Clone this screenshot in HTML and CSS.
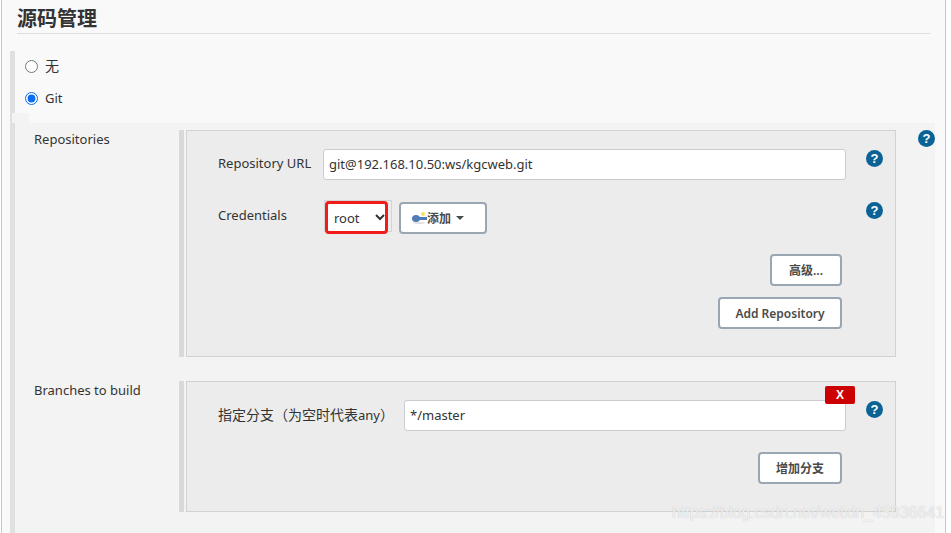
FILE: index.html
```html
<!DOCTYPE html>
<html lang="zh">
<head>
<meta charset="utf-8">
<title>源码管理</title>
<link rel="stylesheet" href="styles.css">
</head>
<body>
<div class="page">
  <h2 class="title">源码管理</h2>
  <div class="scm">
    <div class="opts">
      <label class="opt"><input type="radio" name="scm"><span class="cjk">无</span></label>
      <label class="opt"><input type="radio" name="scm" checked><span>Git</span></label>
    </div>
    <div class="tab"></div>
    <div class="panel">
      <div class="section repos">
        <div class="sec-label">Repositories</div>
        <div class="box repo-box">
          <div class="row url-row">
            <label class="lbl">Repository URL</label>
            <input class="text" type="text" value="git@192.168.10.50:ws/kgcweb.git">
            <svg class="help" viewBox="0 0 17 17"><circle cx="8.5" cy="8.5" r="8.5"/><text x="8.5" y="13.2" text-anchor="middle">?</text></svg>
          </div>
          <div class="row cred-row">
            <label class="lbl">Credentials</label>
            <div class="cred">
              <span class="sel-wrap"><select class="sel"><option>root</option></select></span>
              <button class="btn add" type="button">
                <svg class="key" viewBox="0 0 15 12"><circle cx="11" cy="2" r="2" fill="#f6e05a"/><ellipse cx="7" cy="11" rx="6" ry="1" fill="#e0e0e0"/><ellipse cx="4" cy="6.5" rx="4" ry="3.5" fill="#4f7cb5"/><rect x="6" y="5" width="9" height="3" fill="#4f7cb5"/></svg><span>添加</span><i class="caret"></i>
              </button>
            </div>
            <svg class="help" viewBox="0 0 17 17"><circle cx="8.5" cy="8.5" r="8.5"/><text x="8.5" y="13.2" text-anchor="middle">?</text></svg>
          </div>
          <div class="actions adv"><button class="btn adv-btn" type="button">高级...</button></div>
          <div class="actions addrepo"><button class="btn addrepo-btn" type="button">Add Repository</button></div>
        </div>
        <svg class="help outer" viewBox="0 0 17 17"><circle cx="8.5" cy="8.5" r="8.5"/><text x="8.5" y="13.2" text-anchor="middle">?</text></svg>
      </div>
      <div class="section branches">
        <div class="sec-label">Branches to build</div>
        <div class="box branch-box">
          <button class="del" type="button">X</button>
          <div class="row url-row">
            <label class="lbl"><span class="cjk">指定分支（为空时代表</span>any<span class="cjk">）</span></label>
            <input class="text" type="text" value="*/master">
            <svg class="help" viewBox="0 0 17 17"><circle cx="8.5" cy="8.5" r="8.5"/><text x="8.5" y="13.2" text-anchor="middle">?</text></svg>
          </div>
          <div class="actions addbranch"><button class="btn branch-btn" type="button">增加分支</button></div>
        </div>
      </div>
    </div>
  </div>
  <div class="watermark">https://blog.csdn.net/weixin_45936641</div>
</div>
</body>
</html>
```
FILE: styles.css
```css
*, *::before, *::after { box-sizing: border-box; }
html, body { margin: 0; height: 100%; background: #fff; overflow: hidden; }
body {
  font-family: "Noto Sans", "Noto Sans CJK SC", sans-serif;
  font-size: 13px;
  color: #333;
}
.cjk { font-size: 14px; font-family: "Noto Sans CJK SC", sans-serif; }
.page {
  position: relative;
  margin-left: 1px;
  width: 945px;
  height: 533px;
  border-left: 1px solid #c8c8c8;
  border-right: 1px solid #c8c8c8;
  background: #f9f9f9;
  overflow: hidden;
}
.title {
  margin: 0 15px 0 15px;
  height: 34px;
  padding-top: 4px;
  font-size: 20px;
  line-height: 28px;
  font-weight: 700;
  font-family: "Noto Sans CJK SC", sans-serif;
  color: #333;
  border-bottom: 1px solid #ddd;
}
.scm {
  margin: 17px 0 0 8px;
  border-left: 5px solid #e0e0e0;
  height: 482px;
}
.opts { display: flex; flex-direction: column; gap: 2px; }
.opt {
  display: flex;
  align-items: center;
  height: 30px;
  padding-left: 10px;
}
.opt .cjk { padding-bottom: 2px; }
.opt input { margin: 0 7px 0 0; width: 13px; height: 13px; accent-color: #0b6cf0; }
.tab { width: 17px; height: 10px; margin-left: -3px; background: #f3f3f3; }
.panel { width: 920px; height: 410px; padding-top: 7px; background: #f3f3f3; }
.section { display: flex; position: relative; padding-left: 19px; }
.sec-label { width: 145px; line-height: 18px; }
.repos { height: 251px; }
.box {
  position: relative;
  width: 710px;
  margin-left: 7px;
  border: 1px solid #d2d2d2;
  background: #ececec;
  padding: 18px 12px 0 31px;
}
.box::before {
  content: "";
  position: absolute;
  left: -8px;
  top: -1px;
  bottom: -1px;
  width: 5px;
  background: #d9d9d9;
}
.repo-box { height: 227px; }
.branch-box { height: 131px; }
.row { display: flex; align-items: flex-start; }
.url-row { height: 31px; }
.lbl { white-space: nowrap; flex: none; width: 105px; height: 28px; line-height: 28px; }
.branch-box .lbl { width: 186px; }
.text {
  flex: 1;
  min-width: 0;
  height: 31px;
  border: 1px solid #c8cdd2;
  border-radius: 3px;
  background: #fff;
  padding: 0 5px 2px;
  font: inherit;
  color: #333;
}
.help { width: 17px; height: 17px; margin: 1px 0 0 20px; flex: none; fill: #0b6395; }
.help text { fill: #fff; font: 700 13px "Liberation Sans", sans-serif; }
.help.outer { position: absolute; left: 903px; top: 0; margin: 0; }
.cred-row { margin-top: 22px; height: 31px; }
.cred-row .help { margin-top: 0; }
.cred-row .lbl { width: 106px; line-height: 26px; }
.cred { flex: 1; display: flex; align-items: flex-start; }
.sel-wrap {
  position: relative;
  display: block;
  flex: none;
  width: 68px;
  height: 32px;
  margin-top: -2px;
  padding: 1px 0 0 1px;
  border: 1px solid #d4d4d4;
}
.sel-wrap::after {
  content: "";
  position: absolute;
  left: 0;
  top: 0;
  width: 63px;
  height: 33px;
  border: 3px solid #f01c1c;
  border-radius: 4px;
  pointer-events: none;
}
.sel {
  display: block;
  width: 62px;
  height: 31px;
  border: 0;
  background: #fff;
  font: inherit;
  color: #333;
  padding-left: 4px;
}
.btn {
  display: block;
  background: #fff;
  border: 2px solid #9aa7b2;
  border-radius: 4px;
  font: 600 12px "Noto Sans", "Noto Sans CJK SC", sans-serif;
  color: #4a4a4a;
  padding: 0;
  height: 32px;
}
.add { width: 88px; margin-left: 7px; display: flex; align-items: center; padding-left: 11px; }
.key { width: 15px; height: 12px; flex: none; }
.caret { width: 0; height: 0; margin-left: 5px; border: 4.5px solid transparent; border-top-color: #4a4a4a; border-bottom: 0; }
.actions { display: flex; justify-content: flex-end; padding-right: 41px; }
.adv { margin-top: 21px; }
.addrepo { margin-top: 11px; }
.adv-btn { width: 72px; }
.addrepo-btn { width: 124px; }
.branch-btn { width: 84px; }
.addbranch { margin-top: 21px; }
.del {
  position: absolute;
  right: 40px;
  top: 4px;
  width: 30px;
  height: 18px;
  border: 0;
  border-radius: 2px;
  background: #cc0000;
  color: #fff;
  font: 700 12px "Liberation Sans", sans-serif;
  padding: 0;
  z-index: 1;
}
.watermark {
  position: absolute;
  left: 670px;
  top: 504px;
  font: 16px "Liberation Sans", sans-serif;
  color: rgba(255,255,255,0.75);
  text-shadow: 0 0 1px rgba(170,170,170,0.8);
  white-space: nowrap;
}
```
